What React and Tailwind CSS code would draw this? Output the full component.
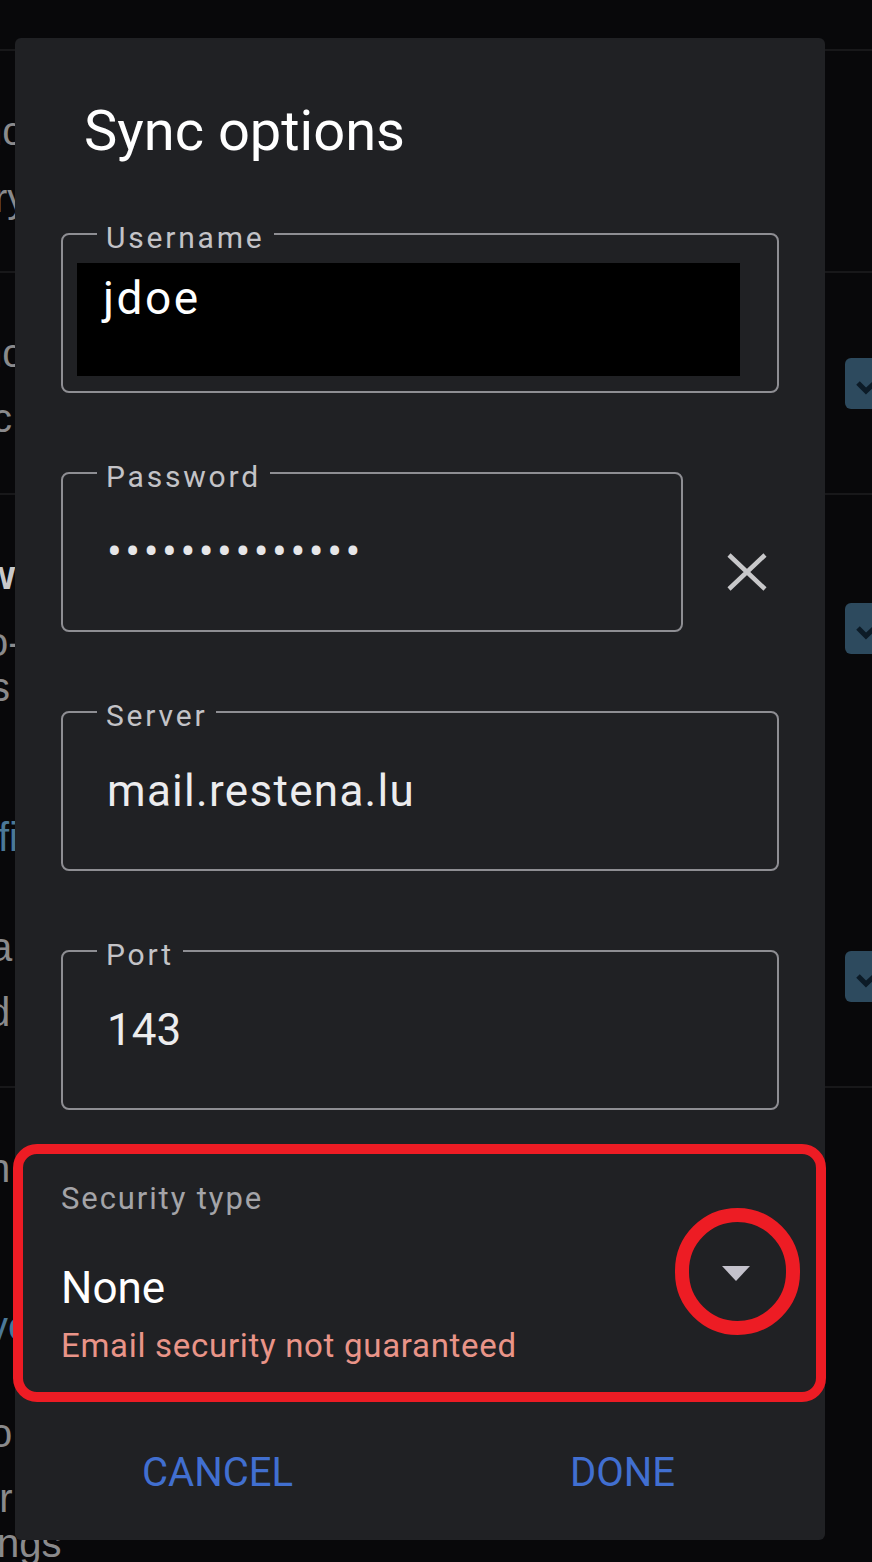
import React from "react";

function Checkbox({ className = "" }) {
  return (
    <div className={`flex h-[51px] w-[50px] items-center justify-center rounded-[6px] bg-[#2d4a5e] ${className}`}>
      <svg width="30" height="22" viewBox="0 0 30 22">
        <path d="M3 10 L11 18 L27 3" fill="none" stroke="#0c1b27" strokeWidth="5" />
      </svg>
    </div>
  );
}

function BgText({ children, className = "" }) {
  return <div className={`h-[40px] text-[40px] leading-[40px] whitespace-nowrap ${className}`}>{children}</div>;
}

function Field({ label, width = "w-[718px]", children }) {
  return (
    <div className={`relative h-[160px] ${width} rounded-[8px] border-2 border-[#8e8e93]`}>
      <span className="absolute -top-[12px] left-[34px] bg-[#202124] px-[9px] text-[30px] leading-[30px] tracking-[2.8px] text-[#c3c3c7]">
        {label}
      </span>
      {children}
    </div>
  );
}

export default function App() {
  return (
    <div className="relative h-[1562px] w-[872px] overflow-hidden bg-[#08080a] font-['Liberation_Sans',Arial,sans-serif] text-[#8a8a8c]">
      {/* settings page behind the dialog */}
      <div className="h-[51px] border-b-2 border-[#18181a]" />
      <div className="h-[222px] border-b-2 border-[#18181a] pt-[60px]">
        <BgText className="-ml-[20px]">nc</BgText>
        <BgText className="mt-[27px] -ml-[6px]">ry</BgText>
      </div>
      <div className="flex h-[222px] justify-between border-b-2 border-[#18181a] pt-[60px]">
        <div>
          <BgText className="-ml-[20px]">nc</BgText>
          <BgText className="mt-[25px] -ml-[8px]">c</BgText>
        </div>
        <Checkbox className="-mr-[23px] mt-[25px]" />
      </div>
      <div className="flex h-[593px] justify-between border-b-2 border-[#18181a] pt-[60px]">
        <div>
          <BgText className="-ml-[16px] font-bold text-[#c8c8ca]">w</BgText>
          <BgText className="mt-[27px] -ml-[14px]">o-</BgText>
          <BgText className="mt-[5px] -ml-[10px]">s</BgText>
          <BgText className="mt-[110px] -ml-[2px] text-[#4b7898]">fi</BgText>
          <BgText className="mt-[70px] -ml-[10px]">a</BgText>
          <BgText className="mt-[25px] -ml-[12px]">d</BgText>
        </div>
        <div>
          <Checkbox className="-mr-[23px] mt-[48px]" />
          <Checkbox className="-mr-[23px] mt-[297px]" />
        </div>
      </div>
      <div className="pt-[60px]">
        <BgText className="-ml-[12px]">n</BgText>
        <BgText className="mt-[118px] -ml-[12px] text-[#4b7898]">ve</BgText>
        <BgText className="mt-[67px] -ml-[10px]">o</BgText>
        <BgText className="mt-[25px] -ml-[14px]">rr</BgText>
        <BgText className="mt-[5px] -ml-[3px]">ngs</BgText>
      </div>

      {/* dialog */}
      <div className="absolute left-[15px] top-[38px] h-[1502px] w-[810px] rounded-[6px] bg-[#202124] px-[46px] pt-[65px] font-['Roboto',sans-serif]">
        <h1 className="ml-[23px] text-[56px] leading-[56px] text-white">Sync options</h1>

        <div className="mt-[74px] flex flex-col gap-[79px]">
          <Field label="Username">
            <div className="ml-[14px] mt-[28px] h-[113px] w-[663px] bg-black pl-[26px] pt-[12px] text-[46px] leading-[46px] tracking-[2.5px] text-white">
              jdoe
            </div>
          </Field>

          <div className="flex items-start">
            <Field label="Password" width="w-[622px]">
              <div className="flex h-full items-center pl-[44px] text-[44px] leading-[44px] tracking-[3.5px] text-[#e6e6e8]">
                ••••••••••••••
              </div>
            </Field>
            <svg className="ml-[44px] mt-[81px]" width="40" height="38" viewBox="0 0 40 38">
              <path d="M2 2 L38 36 M38 2 L2 36" stroke="#c8c8ca" strokeWidth="4.5" />
            </svg>
          </div>

          <Field label="Server">
            <div className="flex h-full items-center pl-[44px] text-[44px] leading-[44px] tracking-[1.3px] text-[#ececee]">
              mail.restena.lu
            </div>
          </Field>

          <Field label="Port">
            <div className="flex h-full items-center pl-[44px] text-[44px] leading-[44px] text-[#ececee]">
              143
            </div>
          </Field>
        </div>

        <div className="relative -ml-[48px] mt-[34px] h-[258px] w-[813px] rounded-[24px] border-[10px] border-[#ed1c24] pl-[38px] pt-[29px]">
          <div className="text-[31px] leading-[31px] tracking-[1.9px] text-[#a4a4a8]">Security type</div>
          <div className="mt-[52px] flex items-start justify-between">
            <span className="text-[44px] leading-[44px] text-white">None</span>
            <svg className="mr-[66px]" width="28" height="15" viewBox="0 0 28 15">
              <path d="M0 0 H28 L14 15 Z" fill="#c4c2cc" />
            </svg>
          </div>
          <div className="mt-[19px] text-[33px] leading-[33px] tracking-[0.7px] text-[#e99488]">Email security not guaranteed</div>
          <div className="absolute left-[652px] top-[54px] h-[127px] w-[125px] rounded-full border-[14px] border-[#ed1c24]" />
        </div>

        <div className="-mx-[46px] mt-[51px] grid grid-cols-2 text-center text-[40px] leading-[40px] text-[#416fd0]">
          <span>CANCEL</span>
          <span>DONE</span>
        </div>
      </div>
    </div>
  );
}
